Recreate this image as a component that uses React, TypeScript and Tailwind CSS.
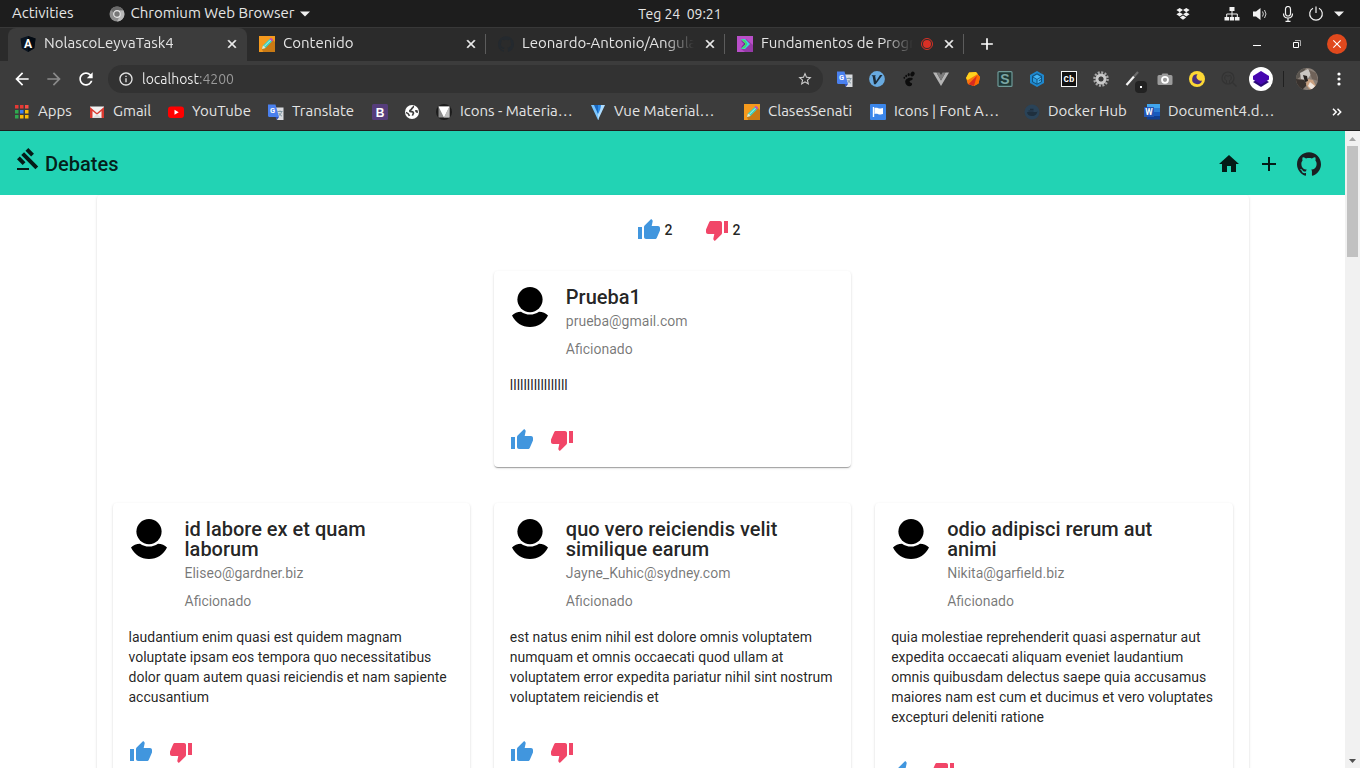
import React from "react";

type IconProps = { className?: string };

/* ---------- shared glyphs ---------- */

const paths = {
  thumbUp:
    "M1 21h4V9H1v12zm22-11c0-1.1-.9-2-2-2h-6.31l.95-4.57.03-.32c0-.41-.17-.79-.44-1.06L14.17 1 7.59 7.59C7.22 7.95 7 8.45 7 9v10c0 1.1.9 2 2 2h9c.83 0 1.54-.5 1.84-1.22l3.02-7.05c.09-.23.14-.47.14-.73v-2z",
  thumbDown:
    "M15 3H6c-.83 0-1.54.5-1.84 1.22l-3.02 7.05c-.09.23-.14.47-.14.73v2c0 1.1.9 2 2 2h6.31l-.95 4.57-.03.32c0 .41.17.79.44 1.06L9.83 23l6.59-6.59c.36-.36.58-.86.58-1.41V5c0-1.1-.9-2-2-2zm4 0v12h4V3h-4z",
  gavel:
    "M1 21h12v2H1zM5.245 8.07l2.83-2.827 14.14 14.142-2.828 2.828zM12.317 1l5.657 5.656-2.83 2.83-5.654-5.66zM3.825 9.485l5.657 5.657-2.828 2.828-5.657-5.657z",
  home: "M10 20v-6h4v6h5v-8h3L12 3 2 12h3v8z",
  add: "M19 13h-6v6h-2v-6H5v-2h6V5h2v6h6v2z",
  github:
    "M12 .297c-6.63 0-12 5.373-12 12 0 5.303 3.438 9.8 8.205 11.385.6.113.82-.258.82-.577 0-.285-.01-1.04-.015-2.04-3.338.724-4.042-1.61-4.042-1.61C4.422 18.07 3.633 17.7 3.633 17.7c-1.087-.744.084-.729.084-.729 1.205.084 1.838 1.236 1.838 1.236 1.07 1.835 2.809 1.305 3.495.998.108-.776.417-1.305.76-1.605-2.665-.3-5.466-1.332-5.466-5.93 0-1.31.465-2.38 1.235-3.22-.135-.303-.54-1.523.105-3.176 0 0 1.005-.322 3.3 1.23.96-.267 1.98-.399 3-.405 1.02.006 2.04.138 3 .405 2.28-1.552 3.285-1.23 3.285-1.23.645 1.653.24 2.873.12 3.176.765.84 1.23 1.91 1.23 3.22 0 4.61-2.805 5.625-5.475 5.92.42.36.81 1.096.81 2.22 0 1.606-.015 2.896-.015 3.286 0 .315.21.69.825.57C20.565 22.092 24 17.592 24 12.297c0-6.627-5.373-12-12-12",
  back: "M20 11H7.83l5.59-5.59L12 4l-8 8 8 8 1.41-1.41L7.83 13H20v-2z",
  forward: "M12 4l-1.41 1.41L16.17 11H4v2h12.17l-5.58 5.59L12 20l8-8z",
  reload:
    "M17.65 6.35C16.2 4.9 14.21 4 12 4c-4.42 0-7.99 3.58-7.99 8s3.57 8 7.99 8c3.73 0 6.84-2.55 7.73-6h-2.08c-.82 2.33-3.04 4-5.65 4-3.31 0-6-2.69-6-6s2.69-6 6-6c1.66 0 3.14.69 4.22 1.78L13 11h7V4l-2.35 2.35z",
  info: "M11 7h2v2h-2zm0 4h2v6h-2zm1-9C6.48 2 2 6.48 2 12s4.480 10 10 10 10-4.480 10-10S17.520 2 12 2zm0 18c-4.410 0-8-3.590-8-8s3.590-8 8-8 8 3.590 8 8-3.590 8-8 8z",
  star: "M22 9.240l-7.190-.620L12 2 9.190 8.630 2 9.240l5.460 4.730L5.820 21 12 17.270 18.180 21l-1.630-7.030L22 9.240zM12 15.400l-3.760 2.270 1-4.280-3.320-2.880 4.380-.380L12 6.100l1.710 4.040 4.380.380-3.320 2.880 1 4.280L12 15.400z",
  close:
    "M19 6.410L17.590 5 12 10.590 6.410 5 5 6.410 10.590 12 5 17.590 6.410 19 12 13.410 17.590 19 19 17.590 13.410 12z",
};

function Glyph({ d, className = "size-6" }: { d: string; className?: string }) {
  return (
    <svg viewBox="0 0 24 24" fill="currentColor" className={`shrink-0 ${className}`} aria-hidden="true">
      <path d={d} />
    </svg>
  );
}

function Svg16({ children, className = "size-4" }: React.PropsWithChildren<IconProps>) {
  return (
    <svg viewBox="0 0 16 16" className={`shrink-0 ${className}`} aria-hidden="true">
      {children}
    </svg>
  );
}

/* ---------- favicons ---------- */

const AngularIcon = () => (
  <Svg16>
    <path d="M8 0l7.500 2.600-1.200 9.700L8 16l-6.300-3.700L.5 2.600z" fill="#0b1521" />
    <path d="M8 0l7.500 2.600-1.200 9.700L8 16z" fill="#030a12" />
    <text x="8" y="12" textAnchor="middle" fontSize="12" fontWeight="700" fill="#fff" fontFamily="Roboto, sans-serif">A</text>
  </Svg16>
);

const PencilIcon = () => (
  <Svg16>
    <path d="M0 0h16v16H0z" fill="#f59a1d" />
    <path d="M13 3l3 3v10H4l-1-3z" fill="#c97a14" />
    <path d="M3 13l1-3.500L10.500 3l2.500 2.500L6.500 12z" fill="#3fd0bd" />
    <path d="M3 13l1-3.500L6.500 12z" fill="#f7e3c0" />
    <path d="M10.500 3l1-1c.6-.6 3 1.600 2.500 2.500l-1 1z" fill="#c04fc0" />
    <path d="M5 10.700L11.500 4.200" stroke="#c4f5ee" strokeWidth=".9" />
  </Svg16>
);

const GithubFavicon = () => <Glyph d={paths.github} className="size-4 text-[#24292e]" />;

const PlatziIcon = () => (
  <Svg16>
    <path d="M0 0h16v16H0z" fill="#b94fc9" />
    <path d="M9 3l7 6v7H8l-4-3z" fill="#963aa8" />
    <path d="M4 3h4l5 5-5 5H4l4.500-5z" fill="#37dbe0" />
    <path d="M4 3l4 1 2.500 4L8 12l-4 1 4.500-5z" fill="#44d46c" />
    <path d="M4.500 5L8 8l-3.500 3" stroke="#6b2a88" fill="none" />
  </Svg16>
);

const AppsIcon = () => (
  <Svg16>
    {[
      ["#e53935", "#e53935", "#fb4b42"],
      ["#2fa84f", "#3d7ff0", "#fbbc05"],
      ["#2fa84f", "#fbbc05", "#fbbc05"],
    ].map((row, y) =>
      row.map((fill, x) => <rect key={`${x}${y}`} x={1 + x * 5} y={1 + y * 5} width="3.500" height="3.500" fill={fill} />),
    )}
  </Svg16>
);

const GmailIcon = () => (
  <Svg16>
    <path d="M1 2.500h14v11.500H1z" fill="#f2f2f2" />
    <path d="M1 14V3l7 6 7-6v11h-2.500V7L8 10.800 3.500 7v7z" fill="#d93a30" />
    <path d="M3.500 14l4.500-4 4.500 4z" fill="#dcdcdc" />
  </Svg16>
);

const YoutubeIcon = () => (
  <Svg16>
    <rect x="0" y="2.500" width="16" height="11.500" rx="3" fill="#f00" />
    <path d="M6.500 5.700v5l4.200-2.500z" fill="#fff" />
  </Svg16>
);

const TranslateIcon = () => (
  <Svg16>
    <path d="M6 3.500h9.500V16H9z" fill="#dadce0" />
    <path d="M9.500 7.500h5M12 6.500v1M13.700 7.500c-.5 2-1.700 3.500-3.200 4.500M10.800 9c.7 1.500 1.800 2.500 3.200 3.200" stroke="#78909c" fill="none" strokeWidth=".9" />
    <path d="M0 .5h7.500L11 13H.8L0 12z" fill="#4a80ee" />
    <path d="M7.500 13H11l-2.200 3z" fill="#3050b8" />
    <text x="4.600" y="9.200" textAnchor="middle" fontSize="7.500" fontWeight="700" fill="#fff" fontFamily="Roboto, sans-serif">G</text>
  </Svg16>
);

const BootstrapIcon = () => (
  <Svg16>
    <rect width="16" height="16" rx="1.500" fill="#563d7c" />
    <text x="8" y="12.500" textAnchor="middle" fontSize="12" fontWeight="700" fill="#fff" fontFamily="Liberation Sans, sans-serif">B</text>
  </Svg16>
);

const GlobeIcon = () => (
  <Svg16>
    <circle cx="8" cy="8" r="7" fill="#fff" />
    <path d="M8.800 2.200c1.500 1-1 1.700-1.200 2.800s-2 .8-1.800 2 2.700.2 3.500 1.400-.8 1.500-.7 3.200M2 8.500c1.500.2 2.800 1.700 3.500 3.300" stroke="#3c3c3c" fill="none" strokeWidth="1.700" />
    <path d="M11 6.500c.8-.8 2-.5 2.800 0v2.500c-1.200.3-2.800-1-2.800-2.500z" fill="#3c3c3c" />
  </Svg16>
);

const MaterialIcon = () => (
  <Svg16>
    <circle cx="8" cy="8" r="8" fill="#1c1c1c" />
    <path d="M2.500 2.500h11v11h-11z" fill="#8c8c8c" />
    <path d="M2.500 2.500h11L8 13.500z" fill="#fff" />
    <path d="M8 13.500l5.500-11v11z" fill="#bdbdbd" />
  </Svg16>
);

const VuetifyIcon = () => (
  <Svg16>
    <path d="M1 1h4l3.500 9V16H8z" fill="#7bc6ff" />
    <path d="M10 1h5L8 16V8z" fill="#aeddff" />
    <path d="M4 1h4.500L8 10z" fill="#1867c0" />
    <path d="M8 1h3c0 3-1.500 6.500-3 9z" fill="#2b8ae8" />
  </Svg16>
);

const FlagIcon = () => (
  <Svg16>
    <rect width="16" height="16" rx="1" fill="#3b86ea" />
    <path d="M3.500 3v10" stroke="#fff" strokeWidth="1.400" />
    <path d="M4.500 4c3-1.200 4.500 1.500 8.500 0v6c-4 1.500-5.500-1.200-8.500 0z" fill="#fff" />
  </Svg16>
);

const DockerIcon = () => (
  <Svg16>
    <circle cx="8" cy="8" r="7.500" fill="#2a4358" />
    <path d="M3 8h9c.8 0 1.500-.5 1.500-1-.2 3-2.500 5-5.500 5S3.200 10.500 3 8z" fill="#1e2f3e" />
    <path d="M4.500 7h5M6 5.300h3.500" stroke="#1e2f3e" strokeWidth="1.200" />
  </Svg16>
);

const WordIcon = () => (
  <Svg16>
    <path d="M3 0h13v4H3z" fill="#41a5ee" />
    <path d="M3 4h13v4H3z" fill="#2b7cd3" />
    <path d="M3 8h13v4H3z" fill="#185abd" />
    <path d="M3 12h13v3.500H3z" fill="#103f91" />
    <rect y="3" width="10" height="10" rx=".5" fill="#2456b5" />
    <text x="5" y="11" textAnchor="middle" fontSize="8.500" fontWeight="700" fill="#fff" fontFamily="Roboto, sans-serif">W</text>
  </Svg16>
);

/* ---------- extension icons ---------- */

const VimiumIcon = () => (
  <Svg16>
    <circle cx="8" cy="8" r="7.900" fill="#68aae0" />
    <path d="M2.500 4.200h4.300l-.6 1.100.8 5 4-6.300h2.500L6.700 13.300H5L3.700 5.400z" fill="#1c2b38" />
  </Svg16>
);

const GnomeIcon = () => (
  <Svg16>
    <g fill="#0c0c0c">
      <ellipse cx="11.500" cy="3" rx="2" ry="2.600" transform="rotate(25 11.500 3)" />
      <ellipse cx="7.700" cy="3.600" rx="1.100" ry="1.600" />
      <ellipse cx="5.200" cy="5" rx=".9" ry="1.300" />
      <ellipse cx="3.300" cy="6.800" rx=".8" ry="1.100" />
      <path d="M11.500 7C8 6 4 7.800 4.200 11c.2 2.500 2.300 4.500 4.500 4.300 1.800-.2 2.700-1.700 2.300-2.900-.5-1-2.200-.6-2.400-1.700C8.600 9 12.500 10 11.500 7z" />
    </g>
  </Svg16>
);

const VueIcon = () => (
  <Svg16>
    <path d="M0 1.500h3.500L8 9.500l4.500-8H16L8 15z" fill="#b5b5b5" />
    <path d="M3.500 1.500h3L8 4l1.500-2.500h3L8 9.500z" fill="#7c7c7c" />
  </Svg16>
);

const GemIcon = () => (
  <Svg16>
    <path d="M4 1.500L11 1l4 5-1.500 6.500-4.500 2.500-6-2L1 7z" fill="#fb8c00" />
    <path d="M4 1.500L11 1l2 2.500-10 6L1 7z" fill="#ffd21e" />
    <path d="M12 3l3 3-1.500 6.500L9 15z" fill="#ff6a00" />
    <path d="M12 3.500L9 15l-6-2-1-3.500z" fill="#f9740e" />
    <path d="M12 4.500L9 15l-5.500-1.800z" fill="#d92b20" />
  </Svg16>
);

const StylusIcon = () => (
  <Svg16>
    <rect x="1" y=".6" width="14" height="14.800" rx="1" fill="#1f3836" stroke="#6f9a98" strokeWidth="1.200" />
    <text x="8" y="13" textAnchor="middle" fontSize="14" fontWeight="700" fill="#7ba5a3" fontFamily="Liberation Sans, sans-serif">S</text>
  </Svg16>
);

const CubeIcon = () => (
  <Svg16>
    <path d="M8 0l7 4v8l-7 4-7-4V4z" fill="#1e88cf" />
    <path d="M8 2.200l5 2.900v5.800l-5 2.900-5-2.900V5.100z" fill="#12527e" />
    <path d="M8 3.500l3.800 2.200L8 7.900 4.200 5.700z" fill="#43b4f5" />
    <path d="M4 6.600l3.500 2v4L4 10.500z" fill="#2a9be0" />
    <path d="M12 6.600v1.500L9.800 9.300v1L12 9.100v1.400l-3.500 2.100v-4z" fill="#43b4f5" />
  </Svg16>
);

const CodeboxIcon = () => (
  <Svg16>
    <rect x=".5" y=".5" width="15" height="15" fill="#111" stroke="#f5f5f5" />
    <text x="8" y="11" textAnchor="middle" fontSize="9" fontWeight="700" fill="#fff" fontFamily="Liberation Mono, monospace">Cb</text>
  </Svg16>
);

const GearIcon = () => (
  <Svg16>
    <circle cx="8" cy="8" r="6.600" fill="none" stroke="#a8a8a8" strokeWidth="2.400" strokeDasharray="2 1.455" />
    <circle cx="8" cy="8" r="4" fill="none" stroke="#c8c8c8" strokeWidth="3" />
    <circle cx="8" cy="8" r="2.300" fill="#3c3c3c" />
  </Svg16>
);

const WandIcon = () => (
  <span className="relative flex size-4">
    <Svg16>
      <path d="M1.500 14L9 5.500" stroke="#f4f4f4" strokeWidth="2.200" />
      <path d="M9 5.500L13 1" stroke="#6d6d6d" strokeWidth="2.200" />
    </Svg16>
    <span className="absolute top-2.5 left-2.5 flex size-3 items-center justify-center rounded-sm bg-[#222]">
      <span className="size-0.5 bg-white" />
    </span>
  </span>
);

const CameraIcon = () => (
  <Svg16>
    <path d="M5.500 2.500h5L11.500 4H14q1.500 0 1.500 1.500v7Q15.500 14 14 14H2Q.5 14 .5 12.500v-7Q.5 4 2 4h2.500z" fill="#9b9b9b" />
    <circle cx="8" cy="8.800" r="3" fill="#9b9b9b" stroke="#fff" strokeWidth="1.800" />
  </Svg16>
);

const MoonIcon = () => (
  <Svg16>
    <circle cx="8" cy="8" r="8" fill="#fdd835" />
    <path d="M8.500 3.200A5 5 0 1 0 13 9.500 4 4 0 0 1 8.500 3.200z" fill="#47307e" />
  </Svg16>
);

const GithubSearchIcon = () => (
  <Svg16>
    <circle cx="7" cy="7" r="6" fill="none" stroke="#333" strokeWidth="1.200" />
    <path d="M11.500 11.500l4 4" stroke="#333" strokeWidth="1.200" />
    <path d="M5.500 12V9.500C3 9 3.500 5 4.800 4.300L6 5h2l1.200-.7C10.500 5 11 9 8.500 9.500V12" fill="none" stroke="#333" />
  </Svg16>
);

const LayersIcon = () => (
  <svg viewBox="0 0 24 24" className="size-6 shrink-0" aria-hidden="true">
    <circle cx="12" cy="12" r="12" fill="#fff" />
    <path d="M4 15l8-4.500 8 4.500-8 5z" fill="#2b0a78" />
    <path d="M4 9l8-5 8 5v3.500L12 17.500 4 12.500z" fill="#4707b0" />
  </svg>
);

const extensions: { label: string; Icon: React.FC }[] = [
  { label: "Translate", Icon: TranslateIcon },
  { label: "Vimium", Icon: VimiumIcon },
  { label: "GNOME Shell", Icon: GnomeIcon },
  { label: "Vue devtools", Icon: VueIcon },
  { label: "Gem", Icon: GemIcon },
  { label: "Stylus", Icon: StylusIcon },
  { label: "Cube", Icon: CubeIcon },
  { label: "Codebox", Icon: CodeboxIcon },
  { label: "Settings", Icon: GearIcon },
  { label: "Wand", Icon: WandIcon },
  { label: "Capture", Icon: CameraIcon },
  { label: "Night mode", Icon: MoonIcon },
  { label: "Repository search", Icon: GithubSearchIcon },
  { label: "Layers", Icon: LayersIcon },
];

/* ---------- desktop bar ---------- */

const Caret = () => (
  <svg viewBox="0 0 10 6" className="h-1.5 w-2.5 shrink-0" aria-hidden="true">
    <path d="M0 .5h10L5 5.500z" fill="#f0f0f0" />
  </svg>
);

function DesktopBar() {
  return (
    <div className="grid h-[27px] shrink-0 grid-cols-[1fr_auto_1fr] items-center bg-[#1d1d1d] px-3 text-[15px] text-[#e6e6e6]">
      <div className="flex items-center">
        <button type="button">Activities</button>
        <button type="button" className="ml-[35px] flex items-center gap-1.5">
          <Svg16>
            <circle cx="8" cy="8" r="7.500" fill="#8d8d8d" />
            <path d="M8 .5A7.500 7.500 0 0 1 14.500 4.500H8a3.500 3.500 0 0 0-3.300 2.300L1.800 3.800A7.500 7.500 0 0 1 8 .5z" fill="#6a6a6a" />
            <path d="M14.500 4.500a7.500 7.500 0 0 1-6.500 11l3-5.700a3.500 3.500 0 0 0-.5-5.300z" fill="#b9b9b9" />
            <circle cx="8" cy="8" r="3.300" fill="#777" stroke="#e8e8e8" strokeWidth="1.200" />
          </Svg16>
          <span>Chromium Web Browser</span>
          <Caret />
        </button>
      </div>
      <time className="text-sm whitespace-pre">Teg 24  09:21</time>
      <div className="flex items-center justify-end pr-1 text-white">
        <Svg16 className="mr-[33px] size-4">
          <path d="M4.700 2L8 4.100 4.700 6.200 1.400 4.100zM11.300 2l3.300 2.100-3.300 2.100L8 4.100zM4.700 6.200L8 8.300l-3.300 2.100-3.300-2.100zM11.300 6.200l3.300 2.100-3.300 2.100L8 8.300zM8 9.600l3.200 2L8 13.700l-3.200-2.100z" fill="#f2f2f2" />
        </Svg16>
        <Svg16 className="mr-3 size-4">
          <path d="M5.500 1h5v4h-5zM.5 11h4.500v3.500H.5zM5.800 11h4.400v3.500H5.800zM11 11h4.500v3.500H11z" fill="#f2f2f2" />
          <path d="M8 4.500V11M2.700 11V8h10.600v3" stroke="#f2f2f2" fill="none" />
        </Svg16>
        <Svg16 className="mr-3 size-4">
          <path d="M1 5.500h3L8.500 2v12L4 10.500H1z" fill="#f2f2f2" />
          <path d="M10.500 5.500q1.800 2.500 0 5M12.500 4q3 4 0 8" stroke="#d0d0d0" fill="none" />
        </Svg16>
        <Svg16 className="mr-3 size-4">
          <rect x="5.500" y=".5" width="5" height="9.500" rx="2.500" fill="none" stroke="#f2f2f2" strokeWidth="1.200" />
          <path d="M3.500 7.500c0 6 9 6 9 0M8 12v3M5.500 15.300h5" stroke="#f2f2f2" fill="none" strokeWidth="1.200" />
        </Svg16>
        <Svg16 className="mr-2.5 size-4">
          <path d="M5 2.300a6.300 6.300 0 1 0 6 0M8 .5V7" stroke="#f2f2f2" fill="none" strokeWidth="1.200" />
        </Svg16>
        <Caret />
      </div>
    </div>
  );
}

/* ---------- browser frame ---------- */

const tabs: { title: string; Icon: React.FC; active?: boolean; recording?: boolean }[] = [
  { title: "NolascoLeyvaTask4", Icon: AngularIcon, active: true },
  { title: "Contenido", Icon: PencilIcon },
  { title: "Leonardo-Antonio/Angular", Icon: GithubFavicon },
  { title: "Fundamentos de Progra", Icon: PlatziIcon, recording: true },
];

function TabStrip() {
  return (
    <div className="flex h-[34px] shrink-0 items-stretch border-t border-[#383838] bg-[#2b2b2b] pl-2">
      {tabs.map(({ title, Icon, active, recording }) => (
        <div
          key={title}
          className={
            active
              ? "flex w-[239px] items-center gap-2 rounded-t-lg bg-[#3c3c3c] pr-[7px] pb-0.5 pl-3"
              : "relative flex w-[239px] items-center gap-2 pr-[7px] pb-0.5 pl-3 after:absolute after:top-1.5 after:right-0 after:h-5 after:w-px after:bg-[#5c5c5c]"
          }
        >
          <Icon />
          <span className="min-w-0 flex-1 overflow-hidden text-[15px] whitespace-nowrap text-[#e4e4e4] [mask-image:linear-gradient(to_right,black_calc(100%-30px),transparent)]">
            {title}
          </span>
          {recording && (
            <span className="flex size-3 items-center justify-center rounded-full border border-[#d93025]">
              <span className="size-2 rounded-full bg-[#d93025]" />
            </span>
          )}
          <button type="button" aria-label={`Close ${title}`} className="flex size-4 items-center justify-center text-[#f0f0f0]">
            <Glyph d={paths.close} className="size-3.5 stroke-current" />
          </button>
        </div>
      ))}
      <button type="button" aria-label="New tab" className="flex w-[46px] items-center justify-center pb-0.5 text-white">
        <Glyph d={paths.add} className="size-5" />
      </button>
      <div className="ml-auto flex items-center pr-[13px] pb-0.5 text-white">
        <button type="button" aria-label="Minimize" className="flex w-10 justify-center pt-1">
          <span className="h-px w-2 bg-white" />
        </button>
        <button type="button" aria-label="Restore" className="flex w-10 justify-center">
          <svg viewBox="0 0 8 8" className="size-2" aria-hidden="true">
            <path d="M.5 2.500h5v5h-5z" fill="none" stroke="#fff" />
            <path d="M2 .5h5.500V6" fill="none" stroke="#aaa" />
          </svg>
        </button>
        <button type="button" aria-label="Close window" className="ml-2.5 flex size-5 items-center justify-center rounded-full bg-[#e0491d]">
          <Glyph d={paths.close} className="size-3.5" />
        </button>
      </div>
    </div>
  );
}

function Toolbar() {
  return (
    <div className="flex h-9 shrink-0 items-center bg-[#3c3c3c] pl-1.5">
      <button type="button" aria-label="Back" className="flex w-8 justify-center text-white">
        <Glyph d={paths.back} className="size-5" />
      </button>
      <button type="button" aria-label="Forward" className="flex w-8 justify-center text-[#8a8a8a]">
        <Glyph d={paths.forward} className="size-5" />
      </button>
      <button type="button" aria-label="Reload" className="flex w-8 justify-center text-white">
        <Glyph d={paths.reload} className="size-5" />
      </button>
      <div className="ml-1.5 flex h-7 min-w-0 flex-1 items-center gap-2 rounded-full bg-[#323232] px-2.5 text-[#e4e4e4]">
        <Glyph d={paths.info} className="size-4" />
        <input
          type="text"
          aria-label="Address"
          defaultValue="localhost:4200"
          className="min-w-0 flex-1 bg-[linear-gradient(90deg,#f2f2f2_58px,#9c9c9c_58px)] bg-clip-text text-sm text-[#f2f2f2] outline-none [-webkit-text-fill-color:transparent]"
        />
        <button type="button" aria-label="Bookmark this page" className="text-[#cfcfcf]">
          <Glyph d={paths.star} className="size-4" />
        </button>
      </div>
      <div className="ml-1.5 flex items-center">
        {extensions.map(({ label, Icon }) => (
          <button key={label} type="button" aria-label={label} className="flex w-8 justify-center">
            <Icon />
          </button>
        ))}
      </div>
      <span className="ml-1.5 h-4 w-px bg-[#202020]" />
      <button type="button" aria-label="Profile" className="ml-3">
        <svg viewBox="0 0 22 22" className="size-[22px]" aria-hidden="true">
          <clipPath id="profile-disc">
            <circle cx="11" cy="11" r="11" />
          </clipPath>
          <g clipPath="url(#profile-disc)">
            <path d="M0 0h22v22H0z" fill="#8b8078" />
            <path d="M0 0h10L4 9 0 12z" fill="#5b5650" />
            <path d="M4 5l8-4 3 5-4 6-6-1z" fill="#c9c6c2" />
            <path d="M13 2l7 3 2 8-6-2z" fill="#6f6259" />
            <path d="M0 11l8 1 3 5-5 5H0z" fill="#39322e" />
            <path d="M11 11l6 1 3 6-6 4-4-5z" fill="#c89f7f" />
            <path d="M7 7l4 1 1 5-3 1z" fill="#25211f" />
            <path d="M14 14l5 4-3 4-4-4z" fill="#eee6df" />
          </g>
        </svg>
      </button>
      <button type="button" aria-label="Menu" className="flex w-[42px] justify-center">
        <svg viewBox="0 0 4 16" className="h-4 w-1" aria-hidden="true">
          <circle cx="2" cy="3" r="1.600" fill="#fff" />
          <circle cx="2" cy="8" r="1.600" fill="#fff" />
          <circle cx="2" cy="13" r="1.600" fill="#fff" />
        </svg>
      </button>
    </div>
  );
}

const bookmarks: { label: string; text?: string; Icon: React.FC; width: string }[] = [
  { label: "Apps", text: "Apps", Icon: AppsIcon, width: "w-[75px]" },
  { label: "Gmail", text: "Gmail", Icon: GmailIcon, width: "w-[79px]" },
  { label: "YouTube", text: "YouTube", Icon: YoutubeIcon, width: "w-[100px]" },
  { label: "Translate", text: "Translate", Icon: TranslateIcon, width: "w-[104px]" },
  { label: "Bootstrap", Icon: BootstrapIcon, width: "w-8" },
  { label: "Web", Icon: GlobeIcon, width: "w-8" },
  { label: "Icons - Material", text: "Icons - Materia…", Icon: MaterialIcon, width: "w-[154px]" },
  { label: "Vue Material", text: "Vue Material…", Icon: VuetifyIcon, width: "w-[154px]" },
  { label: "ClasesSenati", text: "ClasesSenati", Icon: PencilIcon, width: "w-[126px]" },
  { label: "Icons | Font Awesome", text: "Icons | Font A…", Icon: FlagIcon, width: "w-[154px]" },
  { label: "Docker Hub", text: "Docker Hub", Icon: DockerIcon, width: "w-[120px]" },
  { label: "Document4", text: "Document4.d…", Icon: WordIcon, width: "w-[140px]" },
];

function BookmarksBar() {
  return (
    <nav className="flex h-[34px] shrink-0 items-center border-b border-[#1f1f1f] bg-[#3c3c3c] pr-[18px] pb-1 pl-3.5 text-[15px] text-[#e4e4e4]">
      {bookmarks.map(({ label, text, Icon, width }) => (
        <a key={label} href="#" aria-label={label} className={`flex shrink-0 items-center gap-2 whitespace-nowrap ${width}`}>
          <Icon />
          {text}
        </a>
      ))}
      <button type="button" aria-label="More bookmarks" className="ml-auto flex text-white">
        <svg viewBox="0 0 10 8" className="h-2 w-2.5" aria-hidden="true">
          <path d="M1 .8L4.200 4 1 7.200M5.500 .8L8.700 4 5.500 7.200" fill="none" stroke="currentColor" strokeWidth="1.500" />
        </svg>
      </button>
    </nav>
  );
}

/* ---------- debates page ---------- */

function Avatar() {
  return (
    <svg viewBox="0 0 40 40" className="size-10 shrink-0" aria-hidden="true">
      <circle cx="20" cy="12.600" r="12.600" />
      <path d="M2 28.500C4 26.200 7.500 24.900 11 24.700c2.700 1.900 5.600 2.800 9 2.800s6.300-.9 9-2.800c3.500.2 7 1.500 9 3.800C34.500 35.500 28 40 20 40S5.500 35.500 2 28.500z" />
    </svg>
  );
}

const elevation =
  "shadow-[0_2px_1px_-1px_rgba(0,0,0,0.2),0_1px_1px_0_rgba(0,0,0,0.14),0_1px_3px_0_rgba(0,0,0,0.12)]";

type Comment = { name: string; email: string; body: string };

const comments: Comment[] = [
  {
    name: "id labore ex et quam laborum",
    email: "Eliseo@gardner.biz",
    body: "laudantium enim quasi est quidem magnam voluptate ipsam eos tempora quo necessitatibus dolor quam autem quasi reiciendis et nam sapiente accusantium",
  },
  {
    name: "quo vero reiciendis velit similique earum",
    email: "Jayne_Kuhic@sydney.com",
    body: "est natus enim nihil est dolore omnis voluptatem numquam et omnis occaecati quod ullam at voluptatem error expedita pariatur nihil sint nostrum voluptatem reiciendis et",
  },
  {
    name: "odio adipisci rerum aut animi",
    email: "Nikita@garfield.biz",
    body: "quia molestiae reprehenderit quasi aspernatur aut expedita occaecati aliquam eveniet laudantium omnis quibusdam delectus saepe quia accusamus maiores nam est cum et ducimus et vero voluptates excepturi deleniti ratione",
  },
];

function CommentCard({ name, email, body }: Comment) {
  return (
    <article className={`rounded bg-white px-4 pt-4 pb-[15px] ${elevation}`}>
      <header className="flex gap-4">
        <Avatar />
        <div className="mr-4 min-w-0">
          <h2 className="text-xl leading-5 font-medium">{name}</h2>
          <p className="mt-1 text-sm leading-5 text-black/54">{email}</p>
          <p className="mt-2 text-sm leading-5 text-black/54">Aficionado</p>
        </div>
      </header>
      <p className="mt-4 text-sm leading-5">{body}</p>
      <div className="mt-[33px] flex gap-4">
        <button type="button" aria-label="Like" className="text-[#4196de]">
          <Glyph d={paths.thumbUp} />
        </button>
        <button type="button" aria-label="Dislike" className="text-[#f14668]">
          <Glyph d={paths.thumbDown} />
        </button>
      </div>
    </article>
  );
}

function DebatesPage() {
  return (
    <div className="flex min-w-0 flex-1 flex-col overflow-hidden bg-white font-[Roboto,sans-serif] text-black/87">
      <header className="flex h-16 shrink-0 items-center justify-between bg-[#22d3b4] px-4">
        <a href="#" className="text-xl leading-8 font-medium whitespace-nowrap">
          <Glyph d={paths.gavel} className="inline-block size-6 align-baseline" /> Debates
        </a>
        <nav className="flex pt-0.5">
          <a href="#" aria-label="Home" className="flex size-10 items-center justify-center">
            <Glyph d={paths.home} />
          </a>
          <a href="#" aria-label="Add debate" className="flex size-10 items-center justify-center">
            <Glyph d={paths.add} />
          </a>
          <a href="#" aria-label="GitHub" className="flex size-10 items-center justify-center text-[#1b1f23]">
            <Glyph d={paths.github} />
          </a>
        </nav>
      </header>
      <main className={`mx-auto w-full max-w-6xl shrink-0 rounded px-4 pt-[23px] pb-6 ${elevation}`}>
        <div className="flex justify-center text-sm leading-6 font-medium">
          <span className="ml-8 flex gap-1">
            <Glyph d={paths.thumbUp} className="size-6 text-[#4196de]" />2
          </span>
          <span className="ml-8 flex gap-1">
            <Glyph d={paths.thumbDown} className="size-6 text-[#f14668]" />2
          </span>
        </div>
        <section className="mt-[29px] grid grid-cols-3 gap-6">
          <div className="col-start-2">
            <CommentCard name="Prueba1" email="prueba@gmail.com" body="lllllllllllllllll" />
          </div>
        </section>
        <section className="mt-9 grid grid-cols-3 gap-6">
          {comments.map((comment) => (
            <CommentCard key={comment.email} {...comment} />
          ))}
        </section>
      </main>
    </div>
  );
}

function ScrollTrack() {
  return (
    <div className="flex w-[15px] shrink-0 flex-col items-center bg-[#f1f1f1]" aria-hidden="true">
      <svg viewBox="0 0 15 15" className="h-[15px] w-[15px] shrink-0">
        <path d="M4 10h7L7.500 6z" fill="#a3a3a3" />
      </svg>
      <span className="h-[111px] w-[11px] bg-[#c1c1c1]" />
      <svg viewBox="0 0 15 15" className="mt-auto h-[15px] w-[15px] shrink-0">
        <path d="M4 6h7L7.500 10z" fill="#505050" />
      </svg>
    </div>
  );
}

export default function App() {
  return (
    <div className="flex h-screen flex-col overflow-hidden bg-[#3c3c3c] font-[Ubuntu,'Noto_Sans',sans-serif]">
      <DesktopBar />
      <TabStrip />
      <Toolbar />
      <BookmarksBar />
      <div className="flex min-h-0 flex-1">
        <DebatesPage />
        <ScrollTrack />
      </div>
    </div>
  );
}
